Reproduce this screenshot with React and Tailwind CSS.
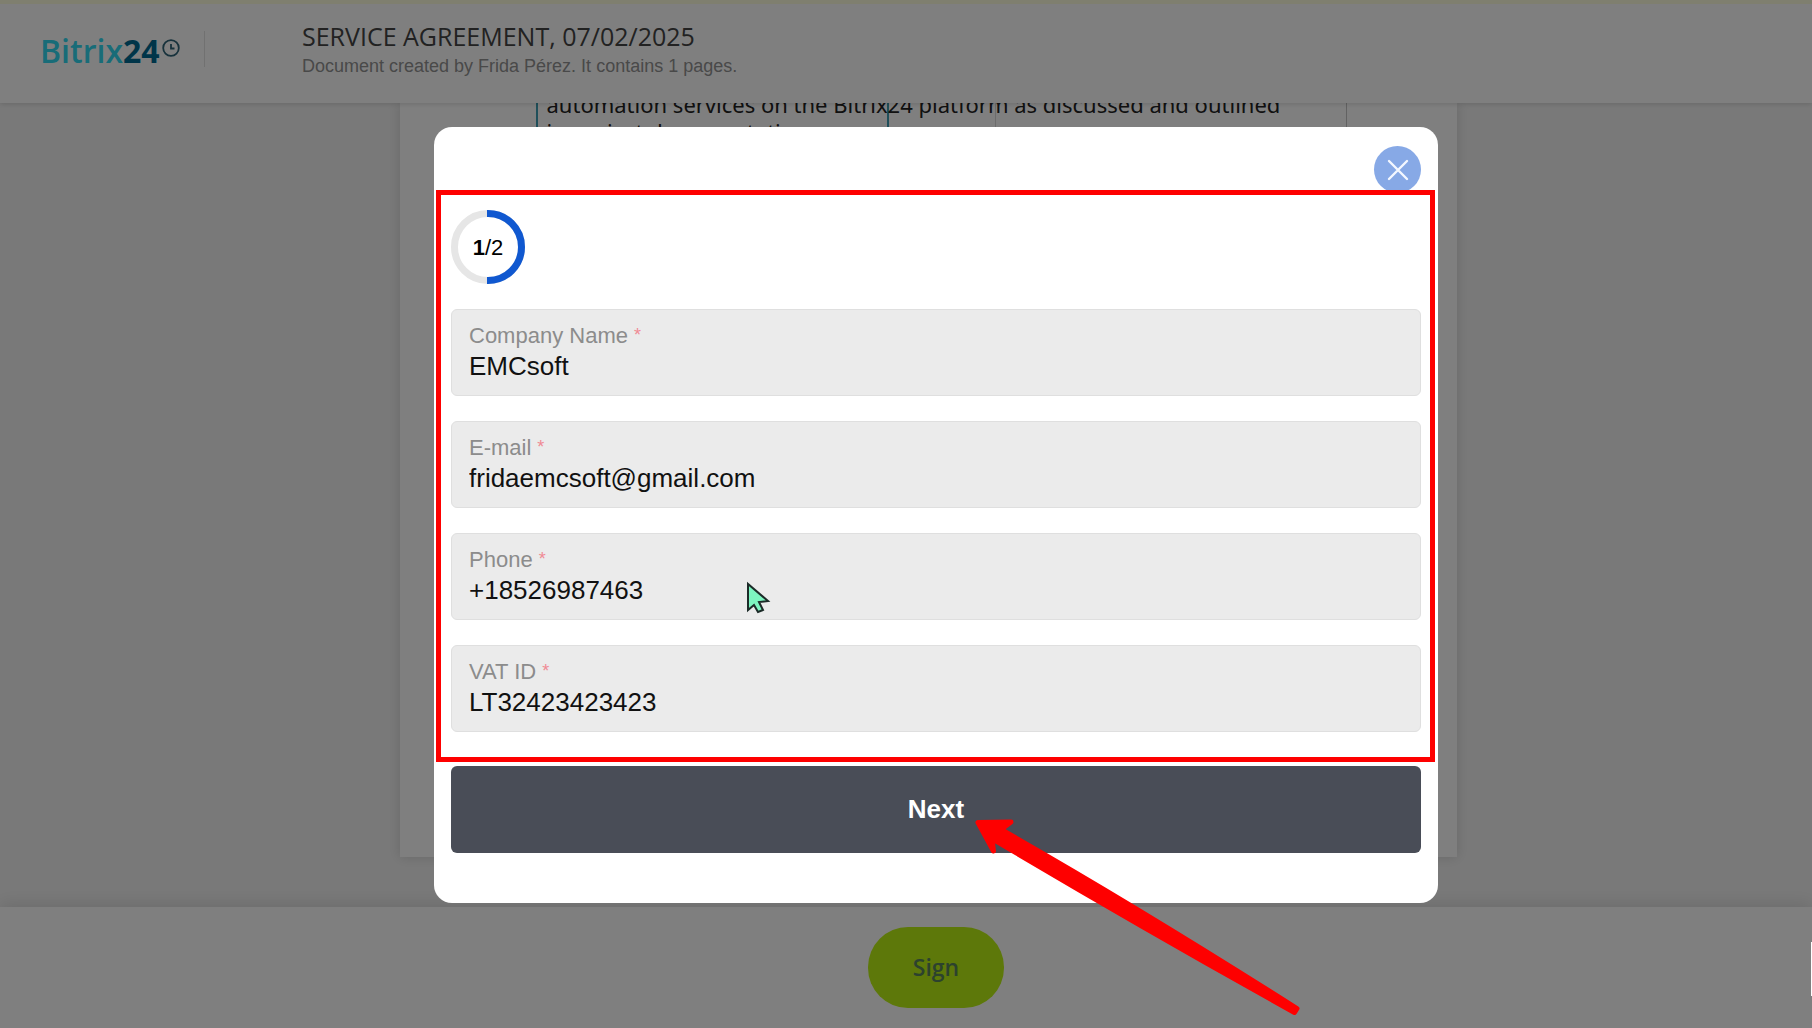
import React, { useState } from "react";

const initialFields = [
  { id: "company", label: "Company Name", type: "text", value: "EMCsoft" },
  { id: "email", label: "E-mail", type: "email", value: "fridaemcsoft@gmail.com" },
  { id: "phone", label: "Phone", type: "tel", value: "+18526987463" },
  { id: "vat", label: "VAT ID", type: "text", value: "LT32423423423" },
];

function Logo() {
  return (
    <a href="#" className="flex items-start font-['Open_Sans',sans-serif] text-[32px] leading-10">
      <span className="font-semibold text-[#30d8f0]">Bitrix</span>
      <span className="font-bold text-[#006a92]">24</span>
      <svg className="w-[18px] h-[18px] mt-2 ml-0.5" viewBox="0 0 18 18" fill="none" stroke="#2f6478" strokeWidth="1.8">
        <circle cx="9" cy="9" r="7.8" />
        <path d="M9 5v4.5h3.5" />
      </svg>
    </a>
  );
}

function Header() {
  return (
    <header className="relative z-10 flex h-[103px] shrink-0 bg-white border-t-4 border-[#ffffdf] shadow-[0_1px_5px_rgba(0,0,0,0.15)]">
      <div className="flex items-start w-[302px] pl-10 pt-[27px]">
        <Logo />
        <div className="w-px h-9 ml-6 bg-[#e2e2e2]"></div>
      </div>
      <div className="pt-4">
        <h1 className="font-['Open_Sans',sans-serif] text-[25px] leading-8 text-[#444]">
          SERVICE AGREEMENT, 07/02/2025
        </h1>
        <p className="text-[18px] leading-7 text-[#929292]">
          Document created by Frida Pérez. It contains 1 pages.
        </p>
      </div>
    </header>
  );
}

function DocumentPage() {
  return (
    <main className="flex flex-1 min-h-0 justify-center overflow-hidden bg-[#f3f3f3] pl-11 pb-[50px]">
      <div className="w-full max-w-[1057px] overflow-hidden bg-white pl-[136px] pr-[110px] shadow-[0_0_12px_rgba(0,0,0,0.15)]">
        <div className="relative h-full border-r border-[#c4c4c4]">
          <div className="absolute inset-y-0 left-0 w-[353px] border-x-2 border-[#3f9fb4]"></div>
          <div className="absolute inset-y-0 left-[459px] w-px bg-[#d8d8d8]"></div>
          <p className="relative -mt-3 pl-[11px] whitespace-nowrap font-['Noto_Sans',sans-serif] text-[22px] leading-[27px] text-[#222]">
            automation services on the Bitrix24 platform as discussed and outlined
            <br />
            in project documentation.
          </p>
        </div>
      </div>
    </main>
  );
}

function Footer() {
  return (
    <footer className="relative flex h-[121px] shrink-0 justify-center items-start bg-white pt-5 pl-[60px] shadow-[0_-4px_16px_rgba(0,0,0,0.1)]">
      <button className="h-[81px] w-[136px] rounded-[40px] bg-[#bbf014] font-['Open_Sans',sans-serif] text-[23px] font-semibold text-[#58855c]">
        Sign
      </button>
    </footer>
  );
}

function Progress() {
  return (
    <div className="relative flex w-[74px] h-[74px] items-center justify-center text-[22px] text-black">
      <svg className="absolute inset-0" viewBox="0 0 74 74" fill="none" strokeWidth="7">
        <circle cx="37" cy="37" r="33.5" stroke="#e6e6e6" />
        <path d="M36 3.5h1a33.5 33.5 0 0 1 0 67h-1" stroke="#1058d0" />
      </svg>
      <span className="relative">
        <b>1</b>/2
      </span>
    </div>
  );
}

function Cursor() {
  return (
    <svg className="absolute left-[294px] top-[47px] w-[26px] h-[34px]" viewBox="0 0 26 34">
      <path
        d="M2 3v26l6-5 4 7 5-2-4-8 9-1z"
        fill="#7df5c0"
        stroke="#1c2b28"
        strokeWidth="2"
      />
    </svg>
  );
}

function Arrow() {
  return (
    <svg className="absolute left-[540px] top-[691px] w-[326px] h-[200px] z-20 pointer-events-none" viewBox="0 0 326 200">
      <path
        d="M4 4.5L37 4 27 11.5Q160 87 323 190.5L320.5 194.5Q160 105 18 20.5L19.5 33z"
        fill="#fe0000"
        stroke="#fe0000"
        strokeWidth="5"
        strokeLinejoin="round"
      />
    </svg>
  );
}

function App() {
  const [fields, setFields] = useState(initialFields);

  const handleChange = (id, value) => {
    setFields(fields.map((field) => (field.id === id ? { ...field, value } : field)));
  };

  return (
    <div className="relative flex flex-col h-screen overflow-hidden bg-white font-['Liberation_Sans',Arial,sans-serif]">
      <Header />
      <DocumentPage />
      <Footer />

      <div className="fixed inset-0 z-20 flex items-center justify-center bg-black/50 pl-[60px] pt-0.5">
        <div className="relative w-full max-w-[1004px] rounded-[18px] bg-white px-[17px] pt-[19px] pb-[50px]">
          <div className="flex justify-end h-16">
            <button
              aria-label="Close"
              className="flex w-[47px] h-[47px] items-center justify-center rounded-full bg-[#87a9e6]"
            >
              <svg className="w-[22px] h-[22px]" viewBox="0 0 22 22" stroke="#f4f8ff" strokeWidth="2.4" strokeLinecap="round">
                <path d="M2 2l18 18M20 2L2 20" />
              </svg>
            </button>
          </div>

          <form className="flex flex-col gap-[25px]" onSubmit={(e) => e.preventDefault()}>
            <Progress />
            {fields.map((field) => (
              <div
                key={field.id}
                className="relative flex flex-col h-[87px] rounded-md border border-[#dfdfdf] bg-[#ebebeb] px-[17px] pt-[13px]"
              >
                <label htmlFor={field.id} className="flex gap-1.5 text-[22px] leading-[26px] text-[#8c8c8c]">
                  {field.label}
                  <span className="text-[18px] leading-6 text-[#f08a94]">*</span>
                </label>
                <input
                  id={field.id}
                  type={field.type}
                  value={field.value}
                  onChange={(e) => handleChange(field.id, e.target.value)}
                  className="w-full h-[34px] bg-transparent text-[26px] text-[#111] outline-none"
                />
                {field.id === "phone" && <Cursor />}
              </div>
            ))}
            <button className="h-[87px] mt-[9px] rounded-md bg-[#494d57] text-[26px] font-bold text-white">
              Next
            </button>
          </form>

          <div className="absolute left-0.5 right-[3px] top-[63px] bottom-[141px] border-[5px] border-[#fe0000] pointer-events-none"></div>
          <Arrow />
        </div>
      </div>
      <div className="absolute right-0 bottom-8 z-30 w-px h-[54px] bg-white"></div>
    </div>
  );
}

export default App;
